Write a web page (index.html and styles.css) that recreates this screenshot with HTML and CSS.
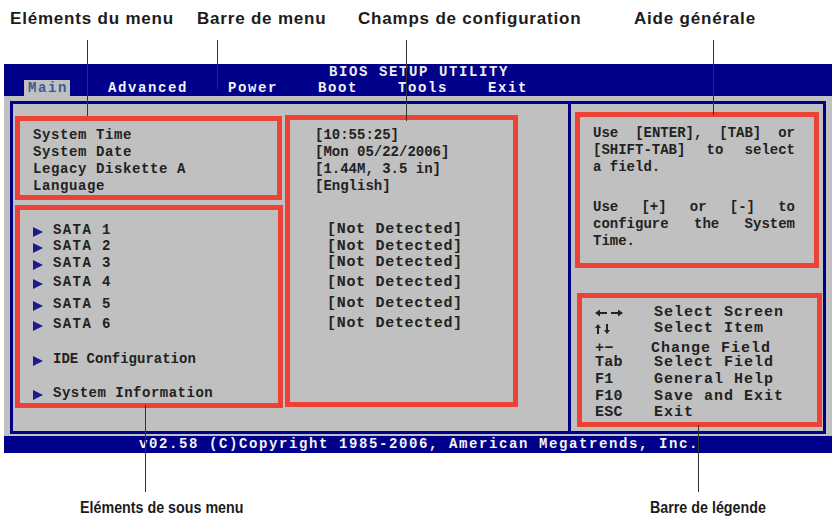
FILE: index.html
```html
<!DOCTYPE html>
<html lang="fr">
<head>
<meta charset="utf-8">
<title>BIOS Setup Utility</title>
<link rel="stylesheet" href="styles.css">
</head>
<body>
<div class="page">
  <div class="top-labels">
    <span class="label">Eléments du menu</span>
    <span class="label">Barre de menu</span>
    <span class="label">Champs de configuration</span>
    <span class="label">Aide générale</span>
  </div>

  <div class="bios">
    <div class="title">BIOS SETUP UTILITY</div>
    <div class="menu">
      <span class="item active">Main</span>
      <span class="item">Advanced</span>
      <span class="item">Power</span>
      <span class="item">Boot</span>
      <span class="item">Tools</span>
      <span class="item">Exit</span>
    </div>
    <div class="main-area">
      <div class="frame">
        <div class="left">
          <div class="col-a">
            <div class="box box-items">
              <div class="ln">System Time</div>
              <div class="ln">System Date</div>
              <div class="ln">Legacy Diskette A</div>
              <div class="ln">Language</div>
            </div>
            <div class="box box-sub">
              <div class="sub sata"><svg class="tri" width="10" height="10" viewBox="0 0 10 10"><polygon points="0,0 10,5 0,10"/></svg><span>SATA 1</span></div>
              <div class="sub sata mt-n1"><svg class="tri" width="10" height="10" viewBox="0 0 10 10"><polygon points="0,0 10,5 0,10"/></svg><span>SATA 2</span></div>
              <div class="sub sata"><svg class="tri" width="10" height="10" viewBox="0 0 10 10"><polygon points="0,0 10,5 0,10"/></svg><span>SATA 3</span></div>
              <div class="sub sata mt2"><svg class="tri" width="10" height="10" viewBox="0 0 10 10"><polygon points="0,0 10,5 0,10"/></svg><span>SATA 4</span></div>
              <div class="sub sata mt5"><svg class="tri" width="10" height="10" viewBox="0 0 10 10"><polygon points="0,0 10,5 0,10"/></svg><span>SATA 5</span></div>
              <div class="sub sata mt3"><svg class="tri" width="10" height="10" viewBox="0 0 10 10"><polygon points="0,0 10,5 0,10"/></svg><span>SATA 6</span></div>
              <div class="sub ide mt18"><svg class="tri" width="10" height="10" viewBox="0 0 10 10"><polygon points="0,0 10,5 0,10"/></svg><span>IDE Configuration</span></div>
              <div class="sub sysinfo mt17"><svg class="tri" width="10" height="10" viewBox="0 0 10 10"><polygon points="0,0 10,5 0,10"/></svg><span>System Information</span></div>
            </div>
          </div>
          <div class="box box-fields">
            <div class="ln val">[10:55:25]</div>
            <div class="ln val">[Mon 05/22/2006]</div>
            <div class="ln val">[1.44M, 3.5 in]</div>
            <div class="ln val">[English]</div>
            <div class="nd-list">
              <div class="ln nd">[Not Detected]</div>
              <div class="ln nd">[Not Detected]</div>
              <div class="ln nd mt-n1">[Not Detected]</div>
              <div class="ln nd mt3">[Not Detected]</div>
              <div class="ln nd mt4">[Not Detected]</div>
              <div class="ln nd mt3">[Not Detected]</div>
            </div>
          </div>
        </div>
        <div class="right">
          <div class="box box-help">
            <div class="ln help j">Use [ENTER], [TAB] or</div>
            <div class="ln help j">[SHIFT-TAB] to select</div>
            <div class="ln help">a field.</div>
            <div class="ln help j mt23">Use [+] or [-] to</div>
            <div class="ln help j">configure the System</div>
            <div class="ln help">Time.</div>
          </div>
          <div class="box box-legend">
            <div class="lg">
              <span class="key"><svg width="28" height="8" viewBox="0 0 28 8"><polygon points="0,4 5,0.5 5,7.5"/><rect x="5" y="3" width="7" height="2"/><rect x="16" y="3" width="7" height="2"/><polygon points="23,0.5 28,4 23,7.5"/></svg></span>
              <span class="desc">Select Screen</span>
            </div>
            <div class="lg mt-n1">
              <span class="key"><svg width="16" height="10" viewBox="0 0 16 10"><polygon points="3,0 6,4 0,4"/><rect x="2" y="4" width="2" height="6"/><rect x="11" y="0" width="2" height="6"/><polygon points="9,6 15,6 12,10"/></svg></span>
              <span class="desc">Select Item</span>
            </div>
            <div class="lg mt3">
              <span class="key">+−</span>
              <span class="desc shift">Change Field</span>
            </div>
            <div class="lg mt-n3">
              <span class="key">Tab</span>
              <span class="desc">Select Field</span>
            </div>
            <div class="lg">
              <span class="key">F1</span>
              <span class="desc">General Help</span>
            </div>
            <div class="lg">
              <span class="key">F10</span>
              <span class="desc">Save and Exit</span>
            </div>
            <div class="lg mt-n1">
              <span class="key">ESC</span>
              <span class="desc">Exit</span>
            </div>
          </div>
        </div>
      </div>
    </div>
    <div class="footer">v02.58 (C)Copyright 1985-2006, American Megatrends, Inc.</div>
  </div>

  <div class="bottom-labels">
    <span class="label narrow">Eléments de sous menu</span>
    <span class="label narrow">Barre de légende</span>
  </div>

  <div class="lead l1"></div>
  <div class="lead l2"></div>
  <div class="lead l3"></div>
  <div class="lead l4"></div>
  <div class="lead l5"></div>
  <div class="lead l6"></div>
</div>
</body>
</html>
```

FILE: styles.css
```css
* { box-sizing: border-box; }

body {
  margin: 0;
  background: #ffffff;
}

.page {
  position: relative;
  width: 832px;
  height: 529px;
  overflow: hidden;
  background: #ffffff;
  font-family: "Liberation Mono", "Courier New", monospace;
  font-weight: bold;
}

/* annotation labels */
.label {
  font-family: "Liberation Sans", Arial, sans-serif;
  font-weight: bold;
  font-size: 17px;
  line-height: 20px;
  letter-spacing: 0.8px;
  color: #1c1c1c;
  white-space: nowrap;
}

.label.narrow {
  display: inline-block;
  letter-spacing: 0;
  transform: scaleX(0.84);
  transform-origin: left center;
}

.top-labels {
  display: grid;
  grid-template-columns: 187px 161px 276px 1fr;
  padding: 9px 0 0 10px;
  height: 29px;
}

.bottom-labels {
  display: grid;
  grid-template-columns: 570px 1fr;
  padding-left: 80px;
  margin-top: 45px;
}

/* BIOS screen */
.bios {
  margin: 35px 0 0 4px;
  width: 828px;
}

.title {
  height: 16px;
  line-height: 16px;
  background: #00008a;
  color: #ececec;
  text-align: center;
  font-size: 14px;
  letter-spacing: 1.6px;
  padding-left: 2px;
}

.menu {
  display: flex;
  height: 16px;
  background: #00008a;
  padding-left: 20px;
}

.item {
  height: 16px;
  line-height: 16px;
  padding: 0 2px 0 4px;
  margin-right: 34px;
  color: #f2f2f2;
  font-size: 14px;
  letter-spacing: 1.6px;
  white-space: nowrap;
}

.item.active {
  background: #c0c0c0;
  color: #3d5a98;
}

.main-area {
  height: 340px;
  background: #c0c0c0;
  padding: 5px 6px 2px 6px;
}

.frame {
  display: flex;
  height: 333px;
  border: 3px solid #00008a;
}

.left {
  display: flex;
  gap: 2px;
  width: 555px;
  padding: 11px 0 0 2px;
}

.col-a {
  display: flex;
  flex-direction: column;
  width: 268px;
}

.right {
  width: 255px;
  border-left: 3px solid #00008a;
  padding: 8px 0 0 4px;
}

.box {
  border: 5px solid #ec4236;
  color: #222222;
}

.ln {
  height: 17px;
  line-height: 17px;
  font-size: 14px;
  white-space: nowrap;
}

.box-items {
  width: 267px;
  height: 84px;
  margin-top: 1px;
  padding: 6px 0 0 13px;
  letter-spacing: 0.6px;
}

.box-sub {
  width: 268px;
  height: 203px;
  margin-top: 5px;
  padding: 12px 0 0 13px;
}

.sub {
  display: flex;
  align-items: center;
  height: 17px;
  line-height: 17px;
  font-size: 14px;
  white-space: nowrap;
}

.sub span {
  margin-left: 10px;
}

.tri {
  fill: #1c1c8c;
  margin-top: 2px;
  flex: none;
}

.sata span { letter-spacing: 1.4px; }
.ide span { letter-spacing: 0; }
.sysinfo span { letter-spacing: 0.5px; }

.box-fields {
  width: 233px;
  height: 292px;
  padding: 7px 0 0 25px;
}

.val { letter-spacing: 0; }

.nd-list {
  margin-top: 26px;
  padding-left: 12px;
}

.nd {
  font-size: 15px;
  letter-spacing: 0.7px;
}

.box-help {
  width: 244px;
  height: 156px;
  padding: 8px 19px 0 13px;
}

.help {
  letter-spacing: 0;
}

.help.j {
  text-align: justify;
  text-align-last: justify;
}

.box-legend {
  width: 245px;
  height: 134px;
  margin: 25px 0 0 2px;
  padding: 6px 0 0 13px;
}

.lg {
  display: flex;
  align-items: center;
  height: 17px;
  line-height: 17px;
  font-size: 15px;
  white-space: nowrap;
}

.key {
  display: flex;
  align-items: center;
  width: 59px;
  letter-spacing: 0.3px;
}

.key svg { fill: #222222; }

.desc { letter-spacing: 1px; }
.desc.shift { margin-left: -3px; }

.footer {
  height: 17px;
  line-height: 17px;
  background: #00008a;
  color: #f2f2f2;
  text-align: center;
  font-size: 14px;
  letter-spacing: 1.6px;
  padding-left: 2px;
  white-space: nowrap;
}

/* spacing helpers */
.mt-n1 { margin-top: -1px; }
.mt-n3 { margin-top: -3px; }
.mt2 { margin-top: 2px; }
.mt3 { margin-top: 3px; }
.mt4 { margin-top: 4px; }
.mt5 { margin-top: 5px; }
.mt17 { margin-top: 17px; }
.mt18 { margin-top: 18px; }
.mt23 { margin-top: 23px; }

/* leader lines of the annotations */
.lead {
  position: absolute;
  width: 1px;
  background: #333333;
}
.l1 { left: 87px; top: 40px; height: 76px; }
.l2 { left: 217px; top: 40px; height: 49px; }
.l3 { left: 406px; top: 40px; height: 81px; }
.l4 { left: 713px; top: 40px; height: 75px; }
.l5 { left: 145px; top: 405px; height: 87px; }
.l6 { left: 698px; top: 425px; height: 67px; }
```
